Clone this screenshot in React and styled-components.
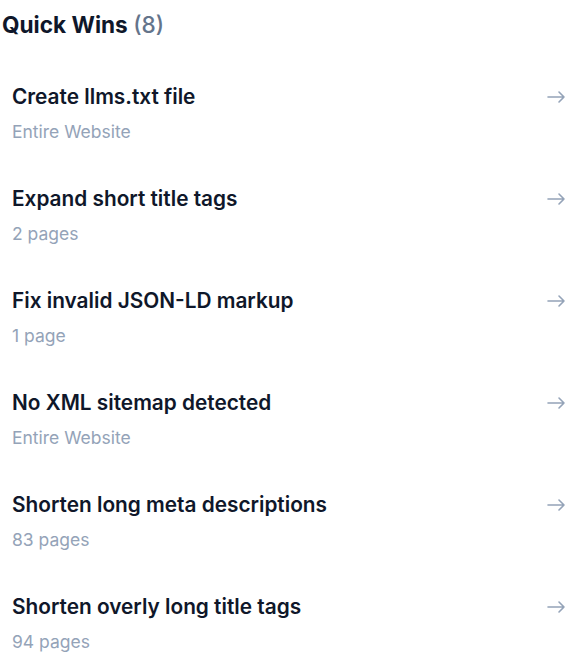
import React from "react";
import styled, { createGlobalStyle } from "styled-components";

const Global = createGlobalStyle`
  html, body { margin: 0; padding: 0; background: #ffffff; }
  body { font-family: Inter, "Noto Sans", sans-serif; -webkit-font-smoothing: antialiased; }
`;

const Page = styled.div`
  width: 584px;
  padding-top: 11px;
  box-sizing: border-box;
`;

const Heading = styled.h2`
  margin: 0 0 28px 2px;
  font-size: 22.6px;
  line-height: 28px;
  font-weight: 700;
  color: #0f172a;
`;

const Count = styled.span`
  font-weight: 500;
  color: #64748b;
`;

const List = styled.ul`
  list-style: none;
  margin: 0;
  padding: 0;
  display: flex;
  flex-direction: column;
  gap: 9px;
`;

const Row = styled.li`
  display: flex;
  align-items: flex-start;
  justify-content: space-between;
  padding: 16px 18px 16px 12px;
  border-radius: 8px;
  cursor: pointer;
`;

const Text = styled.div`
  display: flex;
  flex-direction: column;
  gap: 9px;
`;

const Title = styled.div`
  font-size: 20.8px;
  line-height: 28px;
  font-weight: 600;
  color: #0f172a;
`;

const Sub = styled.div`
  font-size: 17.5px;
  line-height: 24px;
  font-weight: 400;
  color: #94a3b8;
`;

const ArrowBox = styled.div`
  width: 20px;
  height: 28px;
  display: flex;
  align-items: center;
  justify-content: center;
  color: #94a3b8;
`;

const Arrow = () => (
  <svg width="20" height="20" viewBox="0 0 20 20" fill="none" stroke="currentColor" strokeWidth="1.6" strokeLinecap="round" strokeLinejoin="round">
    <path d="M2 10h16M13 5l5 5-5 5" />
  </svg>
);

const items = [
  ["Create llms.txt file", "Entire Website"],
  ["Expand short title tags", "2 pages"],
  ["Fix invalid JSON-LD markup", "1 page"],
  ["No XML sitemap detected", "Entire Website"],
  ["Shorten long meta descriptions", "83 pages"],
  ["Shorten overly long title tags", "94 pages"],
];

export default function App() {
  return (
    <Page>
      <Global />
      <Heading>
        Quick Wins <Count>(8)</Count>
      </Heading>
      <List>
        {items.map(([t, s]) => (
          <Row key={t}>
            <Text>
              <Title>{t}</Title>
              <Sub>{s}</Sub>
            </Text>
            <ArrowBox>
              <Arrow />
            </ArrowBox>
          </Row>
        ))}
      </List>
    </Page>
  );
}
